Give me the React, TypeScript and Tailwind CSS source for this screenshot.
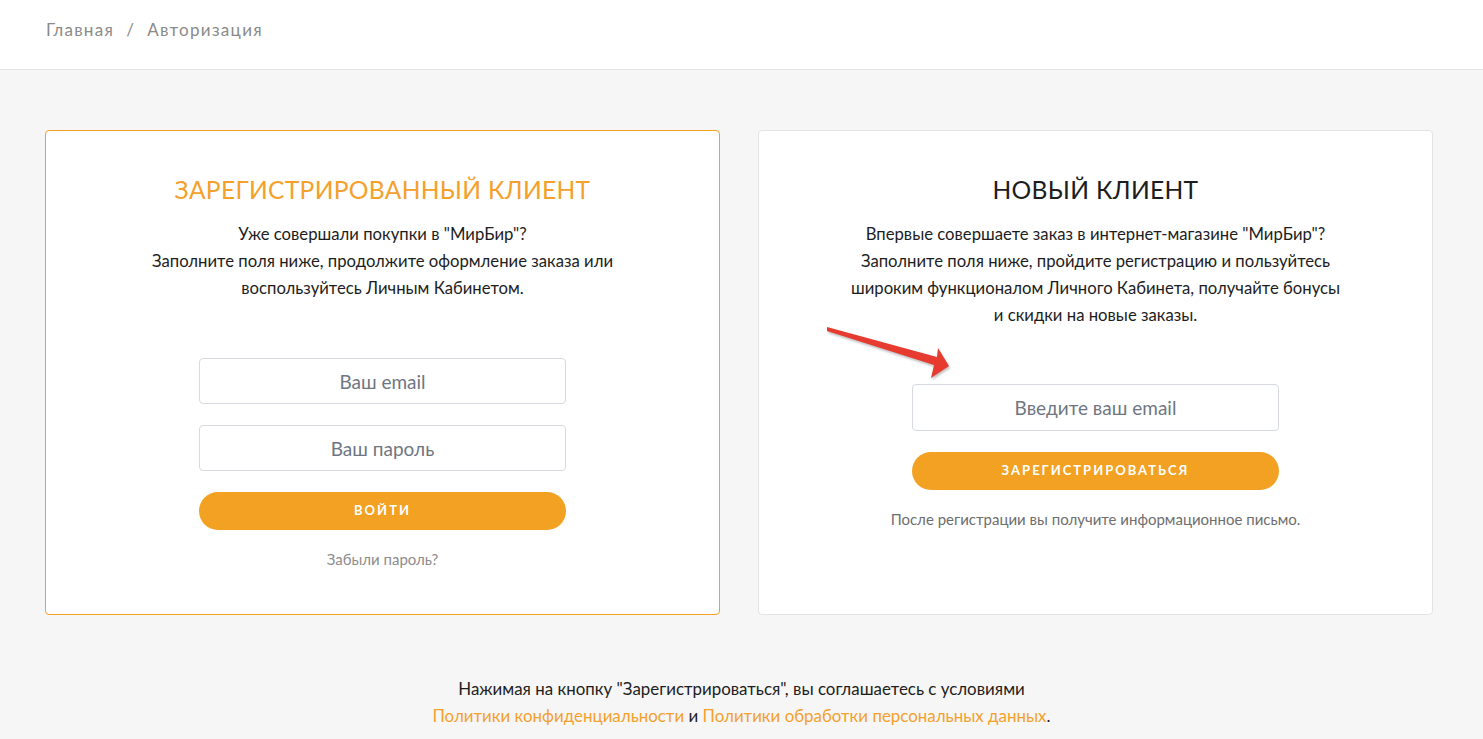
import React from "react";

const font = { fontFamily: "Lato, 'Noto Sans', sans-serif" };

function Arrow() {
  return (
    <svg
      className="absolute left-[62px] top-[190px] drop-shadow-[1px_2px_1px_rgba(0,0,0,0.25)]"
      width="135"
      height="64"
      viewBox="0 0 135 64"
    >
      <polygon
        points="6,6 116,36 117,27 128,45 110,57 113,44 6,10"
        fill="#e63b2e"
        strokeLinejoin="round"
      />
    </svg>
  );
}

export default function App() {
  return (
    <div className="min-h-[739px] bg-[#f6f6f6] text-[#1d1d1d]" style={font}>
      {/* Breadcrumbs */}
      <div className="flex h-[70px] items-center border-b border-[#e2e3e7] bg-white px-[46px] pb-[10px] text-[17px] tracking-[1.3px] text-[#8a8a8a]">
        <span>Главная</span>
        <span className="mx-[12px]">/</span>
        <span>Авторизация</span>
      </div>

      <div className="grid grid-cols-2 gap-[38px] pl-[45px] pr-[50px] pt-[60px]">
        {/* Registered */}
        <div className="flex h-[485px] flex-col items-center rounded-[4px] border border-[#f2a122] bg-white pt-[44px]">
          <h2 className="text-[24.6px] leading-[30px] tracking-[0.3px] text-[#f4a12c]">
            ЗАРЕГИСТРИРОВАННЫЙ КЛИЕНТ
          </h2>
          <p className="mt-[16px] text-center text-[16.7px] leading-[27px]">
            Уже совершали покупки в "МирБир"?
            <br />
            Заполните поля ниже, продолжите оформление заказа или
            <br />
            воспользуйтесь Личным Кабинетом.
          </p>
          <div className="mt-[56px] flex w-[367px] flex-col gap-[21px]">
            <input
              placeholder="Ваш email"
              className="h-[46px] rounded-[4px] border border-[#d6d9df] text-center text-[19px] placeholder:text-[#6f7682] outline-none"
            />
            <input
              placeholder="Ваш пароль"
              className="h-[46px] rounded-[4px] border border-[#d6d9df] text-center text-[19px] placeholder:text-[#6f7682] outline-none"
            />
            <button className="h-[38px] rounded-full bg-[#f2a122] text-[13px] font-bold tracking-[2px] text-white">
              ВОЙТИ
            </button>
          </div>
          <a className="mt-[19px] text-[15px] leading-[20px] text-[#8c8c8c]">Забыли пароль?</a>
        </div>

        {/* New client */}
        <div className="relative flex h-[485px] flex-col items-center rounded-[4px] border border-[#e3e3e3] bg-white pt-[44px]">
          <h2 className="text-[24.6px] leading-[30px] tracking-[0.3px] text-[#1d1d1d]">НОВЫЙ КЛИЕНТ</h2>
          <p className="mt-[16px] text-center text-[16.7px] leading-[27px]">
            Впервые совершаете заказ в интернет-магазине "МирБир"?
            <br />
            Заполните поля ниже, пройдите регистрацию и пользуйтесь
            <br />
            широким функционалом Личного Кабинета, получайте бонусы
            <br />
            и скидки на новые заказы.
          </p>
          <Arrow />
          <div className="mt-[55px] flex w-[367px] flex-col gap-[21px]">
            <input
              placeholder="Введите ваш email"
              className="h-[47px] rounded-[4px] border border-[#d6d9df] text-center text-[19px] placeholder:text-[#6f7682] outline-none"
            />
            <button className="h-[38px] rounded-full bg-[#f2a122] text-[13px] font-bold tracking-[2px] text-white">
              ЗАРЕГИСТРИРОВАТЬСЯ
            </button>
          </div>
          <p className="mt-[19px] text-[15px] leading-[20px] text-[#6e6e6e]">
            После регистрации вы получите информационное письмо.
          </p>
        </div>
      </div>

      {/* Agreement */}
      <p className="pt-[60px] pb-[10px] text-center text-[16.9px] leading-[27px]">
        Нажимая на кнопку "Зарегистрироваться", вы соглашаетесь с условиями
        <br />
        <a className="text-[#f4a12c]">Политики конфиденциальности</a> и{" "}
        <a className="text-[#f4a12c]">Политики обработки персональных данных</a>.
      </p>
    </div>
  );
}
